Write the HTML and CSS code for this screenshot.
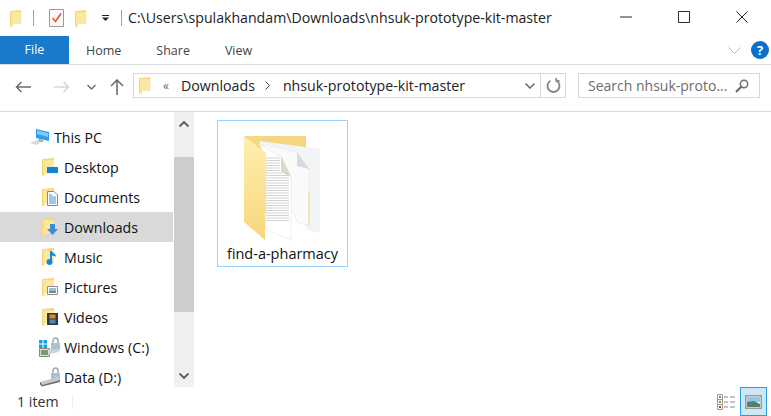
FILE: index.html
```html
<!DOCTYPE html>
<html lang="en">
<head>
    <meta charset="UTF-8">
    <meta name="viewport" content="width=device-width, initial-scale=1.0">
    <title>nhsuk-prototype-kit-master</title>
    <link rel="stylesheet" href="styles.css">
</head>
<body>
    <svg class="defs" width="0" height="0">
        <symbol id="folder" viewBox="0 0 14 18">
            <path d="M0 1 L12 0 V14 L3 14 V17 L0 18 Z" fill="#f4d477"/>
            <path d="M3 2 L12 2 V15 L3 15 V17.4 L1 17.6 V1 Z" fill="#ffe38f"/>
            <path d="M3 3 H12 V15 H3 Z" fill="#fbe8a6"/>
        </symbol>
        <linearGradient id="flap" x1="0" y1="0" x2="0" y2="1">
            <stop offset="0" stop-color="#ffeeb0"/>
            <stop offset="1" stop-color="#f8d77c"/>
        </linearGradient>
    </svg>

    <div class="titlebar">
        <svg class="qa-folder"><use href="#folder"/></svg>
        <span class="qa-sep"></span>
        <svg class="qa-check" viewBox="0 0 15 18">
            <path d="M.5.5H14.5V17.5H.5Z" fill="#fafafa" stroke="#9a9a9a"/>
            <path d="M3.5 9 L6.5 12.5 L12 4.5" fill="none" stroke="#e2582a" stroke-width="1.6"/>
        </svg>
        <svg class="qa-folder qa-folder2"><use href="#folder"/></svg>
        <svg class="qa-drop" viewBox="0 0 7 6">
            <path d="M0 0H7V1H0ZM0 2.500H7L3.500 6Z" fill="#222"/>
        </svg>
        <span class="qa-sep qa-sep2"></span>
        <span class="title-text">C:\Users\spulakhandam\Downloads\nhsuk-prototype-kit-master</span>
        <div class="win-btns">
            <svg viewBox="0 0 13 13"><path d="M0 6.500H13" stroke="#111" fill="none"/></svg>
            <svg viewBox="0 0 13 13"><path d="M.5.5H12.500V12.500H.5Z" stroke="#111" fill="none"/></svg>
            <svg viewBox="0 0 13 13"><path d="M.5.5L12.500 12.500M12.500.5L.5 12.500" stroke="#111" fill="none"/></svg>
        </div>
    </div>

    <div class="tabs">
        <span class="tab-file">File</span>
        <span class="tab">Home</span>
        <span class="tab">Share</span>
        <span class="tab">View</span>
        <svg class="ribbon-chev" viewBox="0 0 13 7"><path d="M.5.5L6.500 6.500L12.500.5" fill="none" stroke="#b4b4b4"/></svg>
        <span class="help">?</span>
    </div>

    <div class="addressrow">
        <svg class="nav-arrow" viewBox="0 0 16 12"><path d="M6.500 1L1.500 6L6.500 11M1.500 6H16" fill="none" stroke="#6d6d6d" stroke-width="1.500"/></svg>
        <svg class="nav-arrow nav-forward" viewBox="0 0 16 12"><path d="M9.500 1L14.500 6L9.500 11M14.500 6H0" fill="none" stroke="#d6d6d6" stroke-width="1.500"/></svg>
        <svg class="nav-down" viewBox="0 0 9 6"><path d="M.5 1L4.500 5L8.500 1" fill="none" stroke="#6d6d6d" stroke-width="1.400"/></svg>
        <svg class="nav-up" viewBox="0 0 14 16"><path d="M1 7L7 1L13 7M7 1V16" fill="none" stroke="#6d6d6d" stroke-width="1.600"/></svg>
        <div class="addressbox">
            <svg class="addr-folder"><use href="#folder"/></svg>
            <span class="addr-more">«</span>
            <span class="crumb">Downloads</span>
            <svg class="crumb-sep" viewBox="0 0 5 9"><path d="M.5.5L4.500 4.500L.5 8.500" fill="none" stroke="#444"/></svg>
            <span class="crumb">nhsuk-prototype-kit-master</span>
            <svg class="addr-chev" viewBox="0 0 10 6"><path d="M.5.5L5 5L9.500.5" fill="none" stroke="#666" stroke-width="1.500"/></svg>
            <span class="addr-refresh">
                <svg viewBox="0 0 15 15"><path d="M4.500 2.800A6 6 0 1 0 10.500 2.800M10 .2L10.500 3.200L13.500 3" fill="none" stroke="#858585" stroke-width="1.800"/></svg>
            </span>
        </div>
        <div class="searchbox">
            <span class="search-text">Search nhsuk-proto...</span>
            <svg viewBox="0 0 14 14"><circle cx="9" cy="5" r="3.700" fill="none" stroke="#6d6d6d" stroke-width="1.500"/><path d="M6.200 7.800L1 13" stroke="#6d6d6d" stroke-width="2.200"/></svg>
        </div>
    </div>

    <div class="main">
        <nav class="tree">
            <div class="tree-row tree-pc">
                <svg class="tree-icon" viewBox="0 0 20 18">
                    <path d="M0 15L9 11L14 13L6 17Z" fill="#d8d8d8"/>
                    <path d="M6 1L19 4V13L6 10Z" fill="#2c9ee8"/>
                    <path d="M7 2.500L18 5V9L7 6Z" fill="#7ccdf5"/>
                    <path d="M9 11L13 12V14L9 13Z" fill="#9aa5ad"/>
                </svg>
                <span>This PC</span>
            </div>
            <div class="tree-row">
                <svg class="tree-icon" viewBox="0 0 16 18">
                    <use href="#folder" width="14" height="18"/>
                    <path d="M5 9H16V16H5Z" fill="#0f84d8"/><path d="M5 15H16V16H5Z" fill="#e4f2fb"/>
                </svg>
                <span>Desktop</span>
            </div>
            <div class="tree-row">
                <svg class="tree-icon" viewBox="0 0 16 18">
                    <use href="#folder" width="14" height="18"/>
                    <path d="M5.500 3.500H12L15.500 7V17.500H5.500Z" fill="#fff" stroke="#7e8a94"/>
                    <path d="M7 7H10M7 9H14M7 11H14M7 13H14M7 15H14" stroke="#3c8fd0"/>
                </svg>
                <span>Documents</span>
            </div>
            <div class="tree-row tree-selected">
                <svg class="tree-icon" viewBox="0 0 16 18">
                    <use href="#folder" width="14" height="18"/>
                    <path d="M8 6H13V11H16L10.500 17L5 11H8Z" fill="#3a8ed6"/>
                </svg>
                <span>Downloads</span>
            </div>
            <div class="tree-row">
                <svg class="tree-icon" viewBox="0 0 16 18">
                    <use href="#folder" width="14" height="18"/>
                    <path d="M9 3V13.500" stroke="#1488dc" stroke-width="2"/>
                    <path d="M9 3C11 5 14 6 14 9C13 8 11 7.500 9.500 7.500Z" fill="#1488dc"/>
                    <circle cx="7.500" cy="14" r="3" fill="#1488dc"/>
                </svg>
                <span>Music</span>
            </div>
            <div class="tree-row">
                <svg class="tree-icon" viewBox="0 0 16 18">
                    <use href="#folder" width="14" height="18"/>
                    <path d="M5.500 8.500H15.500V16.500H5.500Z" fill="#fff" stroke="#8e8e8e"/>
                    <path d="M7 10H14V12.500H7Z" fill="#8cc4ea"/><path d="M7 12.500H14V15H7Z" fill="#6f9078"/>
                </svg>
                <span>Pictures</span>
            </div>
            <div class="tree-row">
                <svg class="tree-icon" viewBox="0 0 16 18">
                    <use href="#folder" width="14" height="18"/>
                    <path d="M5 5H16V17H5Z" fill="#33383c"/>
                    <path d="M7.500 6.500H13.500V10.500H7.500Z" fill="#d58a3e"/>
                    <path d="M7.500 11.500H13.500V15.500H7.500Z" fill="#4f87b8"/>
                </svg>
                <span>Videos</span>
            </div>
            <div class="tree-row tree-drive">
                <svg class="tree-icon" viewBox="0 0 22 20">
                    <path d="M0 3H3.500V6.500H0ZM4.500 3H8V6.500H4.500ZM0 7.500H3.500V11H0ZM4.500 7.500H8V11H4.500Z" fill="#12a0e8"/>
                    <path d="M.5 11.500H10.500V19.500H.5Z" fill="#ddd" stroke="#888"/>
                    <path d="M2 13H9V18H2Z" fill="#7b9a70"/>
                    <path d="M14 6V3.500A2.500 2.500 0 0 1 19 3.500V6" fill="none" stroke="#98a4ac" stroke-width="1.400"/>
                    <path d="M12 6H21V12C21 15 12 15 12 12Z" fill="#a9c3d3"/>
                    <path d="M10 13L20 12V15L10 17Z" fill="#cfd3d6"/>
                </svg>
                <span>Windows (C:)</span>
            </div>
            <div class="tree-row tree-drive">
                <svg class="tree-icon" viewBox="0 0 22 20">
                    <path d="M14 6V3.500A2.500 2.500 0 0 1 19 3.500V6" fill="none" stroke="#98a4ac" stroke-width="1.400"/>
                    <path d="M12 6H21V13H12Z" fill="#a9c3d3"/>
                    <path d="M1 15L19 10L21 13L3 18Z" fill="#c6c9cb"/>
                    <path d="M1 15L3 18V19.500L1 17Z" fill="#3c3c3c"/>
                    <path d="M3 18L21 13V15L3 19.500Z" fill="#707070"/>
                </svg>
                <span>Data (D:)</span>
            </div>
        </nav>

        <div class="scrollbar">
            <svg class="scroll-arrow" viewBox="0 0 10 6"><path d="M.5 5.500L5 1L9.500 5.500" fill="none" stroke="#555" stroke-width="1.800"/></svg>
            <div class="scroll-thumb"></div>
            <svg class="scroll-arrow scroll-arrow-down" viewBox="0 0 10 6"><path d="M.5.5L5 5L9.500.5" fill="none" stroke="#555" stroke-width="1.800"/></svg>
        </div>

        <section class="files">
            <div class="file-item">
                <svg class="big-folder" viewBox="0 0 78 106">
                    <path d="M0 0H62V40L12 86Z" fill="#f6d680"/>
                    <!-- back page -->
                    <path d="M15 5L76 13V97L63 94Z" fill="#f3f4f5"/>
                    <!-- middle page -->
                    <path d="M15 8L53 16L65 33V89L54 87Z" fill="#fafafa" stroke="#e9e9e9" stroke-width=".6"/>
                    <path d="M53 16V30L65 33Z" fill="#d9dadb"/>
                    <path d="M65 56V89" stroke="#f6dc8f" stroke-width="1.200"/>
                    <!-- front page -->
                    <path d="M17 9L37 21L47 41V104L22 94Z" fill="#fff" stroke="#e4e4e4" stroke-width=".6"/>
                    <path d="M37 21V36L47 41Z" fill="#d6d6d6"/>
                    <path d="M37 21L47 41" stroke="#f5dc95"/>
                    <g stroke="#d2d2d2">
                        <path d="M22 22H36M22 24.500H36M22 27H36M22 29.500H36M22 32H36M22 34.500H36"/>
                        <path d="M22 37H38M22 39.500H45M22 42H45M22 44.500H45M22 47H45M22 49.500H45M22 52H45M22 54.500H45M22 57H45"/>
                        <path d="M22 59.500H45M22 62H45M22 64.500H45M22 67H45M22 69.500H45M22 72H45M22 74.500H45M22 77H45M22 79.500H45M22 82H45M22 84.500H45"/>
                    </g>
                    <!-- front flap -->
                    <path d="M0 0L22 17V76L21 78V104L0 86Z" fill="url(#flap)"/>
                </svg>
                <span class="file-name">find-a-pharmacy</span>
            </div>
        </section>
    </div>

    <footer class="statusbar">
        <span class="status-text">1 item</span>
        <span class="status-sep"></span>
        <svg class="view-details" viewBox="0 0 18 16">
            <path d="M.5.5H5.500V5.500H.5ZM.5 5.500H5.500V10.500H.5ZM.5 10.500H5.500V15.500H.5Z" fill="#fff" stroke="#999"/>
            <path d="M2 2H4V4H2Z" fill="#3b8fd3"/><path d="M2 7H4V9H2Z" fill="#8f8a30"/><path d="M2 12H4V14H2Z" fill="#b23a20"/>
            <path d="M7 3H11M13 3H18M7 8H11M13 8H18M7 13H11M13 13H18" stroke="#888"/>
        </svg>
        <span class="view-large">
            <svg viewBox="0 0 17 14">
                <path d="M.75.75H16.250V13.250H.75Z" fill="#fff" stroke="#999" stroke-width="1.500"/>
                <path d="M2 2H15V7H2Z" fill="#8cc8f0"/><path d="M2 7L9 6L15 9V12H2Z" fill="#55806e"/>
            </svg>
        </span>
    </footer>
</body>
</html>
```

FILE: styles.css
```css
html, body {
    margin: 0;
    padding: 0;
}

body {
    width: 771px;
    height: 416px;
    overflow: hidden;
    background-color: #fff;
    font-family: "Open Sans", "Noto Sans", sans-serif;
    font-size: 14.2px;
    color: #111;
    display: flex;
    flex-direction: column;
}

.defs {
    position: absolute;
}

svg {
    display: block;
    flex: none;
}

/* title bar */
.titlebar {
    height: 36px;
    flex: none;
    display: flex;
    align-items: center;
    padding-left: 10px;
}

.qa-folder {
    width: 13px;
    height: 17px;
}

.qa-sep {
    width: 1px;
    height: 16px;
    background-color: #a0a0a0;
    margin: 0 15px 0 10px;
}

.qa-check {
    width: 15px;
    height: 18px;
}

.qa-folder2 {
    margin-left: 11px;
}

.qa-drop {
    width: 7px;
    height: 6px;
    margin-left: 14px;
}

.qa-sep2 {
    margin: 0 6px 0 12px;
}

.title-text {
    margin-bottom: 1px;
    font-size: 14.15px;
    color: #222;
    white-space: nowrap;
}

.win-btns {
    margin-left: auto;
    margin-bottom: 2px;
    display: flex;
    gap: 46px;
    padding-right: 23px;
}

.win-btns svg {
    width: 12px;
    height: 12px;
}

/* ribbon tabs */
.tabs {
    height: 28px;
    flex: none;
    display: flex;
    align-items: center;
    gap: 35px;
    border-bottom: 1px solid #dadbdc;
    font-size: 12.5px;
    color: #444;
}

.tab-file {
    width: 69px;
    height: 28px;
    margin-right: -18px;
    line-height: 28px;
    text-align: center;
    background-color: #1979ca;
    color: #fff;
}

.ribbon-chev {
    width: 13px;
    height: 7px;
    margin-left: auto;
    margin-right: -25px;
}

.help {
    width: 18px;
    height: 18px;
    margin-right: 2px;
    border-radius: 50%;
    background-color: #0b6fcb;
    color: #fff;
    font-size: 13px;
    font-weight: 700;
    line-height: 18px;
    text-align: center;
}

/* address row */
.addressrow {
    height: 41px;
    flex: none;
    display: flex;
    align-items: center;
    border-bottom: 1px solid #d9d9d9;
    padding: 0 0 5px 15px;
}

.nav-arrow {
    width: 16px;
    height: 12px;
    margin-top: 3px;
}

.nav-forward {
    margin-left: 23px;
}

.nav-down {
    width: 9px;
    height: 6px;
    margin: 3px 0 0 17px;
}

.nav-up {
    width: 14px;
    height: 16px;
    margin: 3px 0 0 14px;
}

.addressbox {
    width: 433px;
    height: 25px;
    margin-left: 9px;
    box-sizing: border-box;
    border: 1px solid #d9d9d9;
    display: flex;
    align-items: center;
    padding-left: 5px;
    color: #222;
}

.addr-folder {
    width: 13px;
    height: 17px;
}

.addr-more {
    margin: 0 12px 0 11px;
    font-size: 12px;
    color: #666;
}

.crumb-sep {
    width: 5px;
    height: 9px;
    margin: 0 13px 0 10px;
}

.addr-chev {
    width: 10px;
    height: 6px;
    margin-left: auto;
    margin-right: 5px;
}

.addr-refresh {
    width: 24px;
    height: 23px;
    border-left: 1px solid #d9d9d9;
    display: flex;
    align-items: center;
    justify-content: center;
}

.addr-refresh svg {
    width: 15px;
    height: 15px;
}

.searchbox {
    width: 182px;
    height: 25px;
    margin-left: 12px;
    box-sizing: border-box;
    border: 1px solid #d9d9d9;
    display: flex;
    align-items: center;
    justify-content: space-between;
    padding: 0 10px 0 9px;
    font-size: 14px;
    color: #6d6d6d;
}

.search-text {
    white-space: nowrap;
}

.searchbox svg {
    width: 14px;
    height: 14px;
}

/* main area */
.main {
    height: 275px;
    flex: none;
    display: flex;
}

.tree {
    width: 173px;
    flex: none;
    padding-top: 10px;
    box-sizing: border-box;
    overflow: hidden;
}

.tree-row {
    height: 30px;
    display: flex;
    align-items: center;
    padding-left: 42px;
    gap: 6px;
    white-space: nowrap;
}

.tree-icon {
    width: 16px;
    height: 18px;
}

.tree-pc {
    padding-left: 30px;
    gap: 4px;
}

.tree-pc .tree-icon {
    width: 20px;
    height: 18px;
}

.tree-drive {
    padding-left: 39px;
    gap: 3px;
}

.tree-drive .tree-icon {
    width: 22px;
    height: 20px;
}

.tree-selected {
    background-color: #d9d9d9;
}

.scrollbar {
    width: 20px;
    flex: none;
    margin-left: 1px;
    background-color: #f0f0f0;
    display: flex;
    flex-direction: column;
    align-items: center;
}

.scroll-arrow {
    width: 10px;
    height: 6px;
    margin-top: 9px;
}

.scroll-thumb {
    width: 100%;
    height: 155px;
    margin-top: 30px;
    background-color: #cdcdcd;
}

.scroll-arrow-down {
    margin-top: auto;
    margin-bottom: 8px;
}

.files {
    flex: 1;
    padding: 8px 0 0 23px;
}

.file-item {
    width: 131px;
    height: 147px;
    box-sizing: border-box;
    border: 1px solid #99d1ff;
    display: flex;
    flex-direction: column;
    align-items: center;
}

.big-folder {
    width: 78px;
    height: 106px;
    margin: 15px 0 0 1px;
}

.file-name {
    margin-top: 2px;
    font-size: 14.5px;
    white-space: nowrap;
}

/* status bar */
.statusbar {
    flex: 1;
    display: flex;
    align-items: center;
    padding-left: 17px;
    color: #333;
}

.status-sep {
    width: 1px;
    height: 14px;
    margin-left: 13px;
    background-color: #ececec;
}

.view-details {
    width: 18px;
    height: 16px;
    margin-left: auto;
}

.view-large {
    width: 27px;
    height: 29px;
    margin: 0 4px 0 5px;
    box-sizing: border-box;
    border: 1px solid #26a0da;
    background-color: #cce8f7;
    display: flex;
    align-items: center;
    justify-content: center;
}

.view-large svg {
    width: 17px;
    height: 14px;
}
```
